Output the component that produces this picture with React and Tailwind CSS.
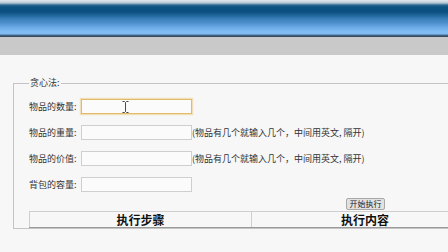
import React from "react";

const fields = [
  { id: "count", label: "物品的数量:", hint: false, focused: true },
  { id: "weight", label: "物品的重量:", hint: true },
  { id: "value", label: "物品的价值:", hint: true },
  { id: "capacity", label: "背包的容量:", hint: false },
];

function IBeam() {
  return (
    <svg className="absolute left-[41px] top-[2px]" width="7" height="12" viewBox="0 0 7 12">
      <path d="M0.5 0.5h2l1 1 1-1h2M3.5 1.5v9M0.5 11.5h2l1-1 1 1h2" fill="none" stroke="#4a4a4a" strokeWidth="1" />
    </svg>
  );
}

export default function App() {
  return (
    <div className="w-[448px] h-[252px] overflow-hidden bg-[#f7f7f7] font-['Noto_Sans_CJK_SC','Noto_Sans',sans-serif] text-[#333]">
      <div className="h-[37px] bg-[linear-gradient(to_bottom,#e4eaee_0px,#b4c6d4_3px,#2d6890_5px,#0b5282_7px,#0a4f7e_12px,#1d6498_15px,#3b7fbb_19px,#4d8fcc_23px,#6aa8e6_27px,#7cbaf2_31px,#82bef4_34px,#4a6a88_35px,#2a4058_37px)]" />
      <div className="h-[18px] bg-[#c9c9c9]" />

      <fieldset className="ml-[13px] mt-[22px] w-[700px] border border-[#c4c4c4] px-[15px] pb-0">
        <legend className="px-[1px] text-[9px] leading-[12px]">贪心法:</legend>
        <div className="flex flex-col gap-[11px] pt-[10px]">
          {fields.map((f) => (
            <div key={f.id} className="flex items-center h-[15px]">
              <span className="w-[52px] text-[9px] leading-[12px] whitespace-nowrap">{f.label}</span>
              <div className="relative">
                <input
                  className={`block w-[111px] h-[15px] bg-[#fbfbfb] border outline-none ${
                    f.focused ? "border-[#e3b96a] shadow-[0_0_1px_1px_rgba(240,200,120,0.5)]" : "border-[#cfcfcf]"
                  }`}
                />
                {f.focused && <IBeam />}
              </div>
              {f.hint && (
                <span className="text-[9px] leading-[12px] whitespace-nowrap">(物品有几个就输入几个，中间用英文, 隔开)</span>
              )}
            </div>
          ))}
        </div>

        <div className="flex mt-[6px] pl-[317px]">
          <button className="h-[12px] w-[39px] rounded-[2px] border border-[#a8a8a8] bg-[#e2e2e2] text-[8px] leading-[10px] text-[#222]">
            开始执行
          </button>
        </div>

        <div className="flex mt-[1px] h-[17px] border-b border-[#9a9a9a]">
          <div className="w-[223px] border-l border-t border-r border-[#cfcfcf] flex items-center justify-center text-[12px] font-bold text-[#111] leading-none">
            执行步骤
          </div>
          <div className="w-[226px] border-t border-[#cfcfcf] flex items-center justify-center text-[12px] font-bold text-[#111] leading-none">
            执行内容
          </div>
        </div>
      </fieldset>
    </div>
  );
}
